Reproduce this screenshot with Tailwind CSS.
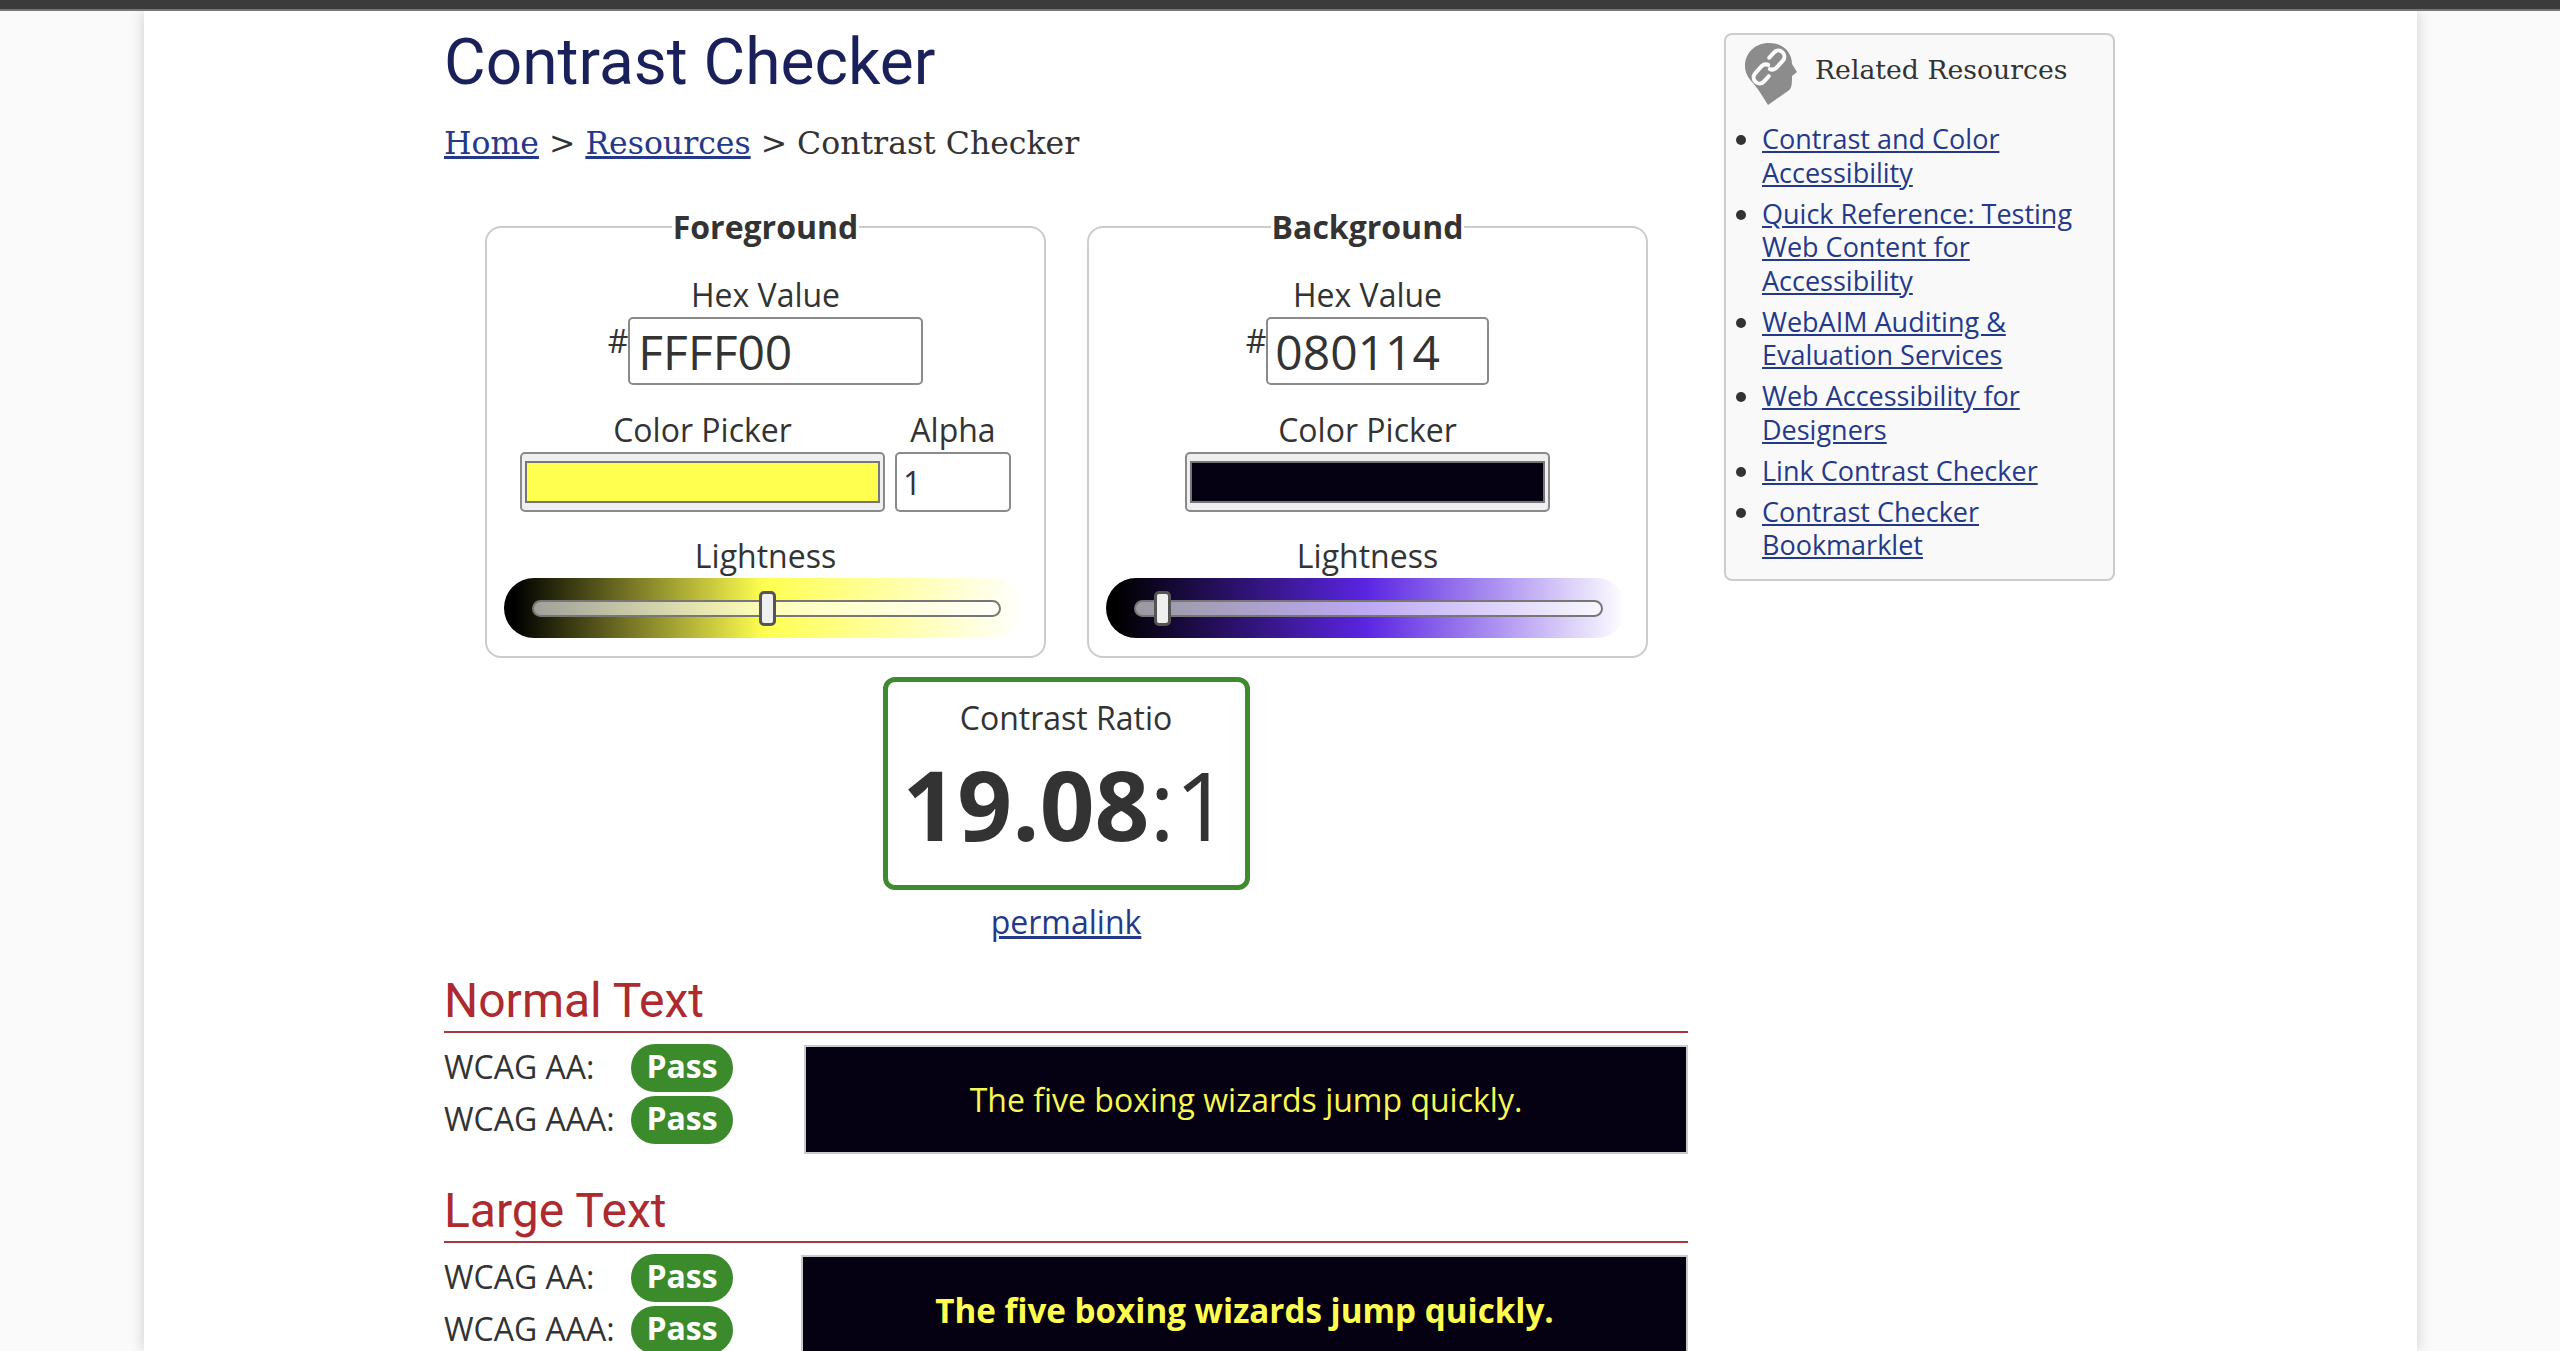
<!DOCTYPE html>
<html lang="en">
<head>
  <meta charset="UTF-8" />
  <meta name="viewport" content="width=device-width, initial-scale=1.0" />
  <title>Contrast Checker</title>
  <script src="https://cdn.jsdelivr.net/npm/@tailwindcss/browser@4"></script>
</head>
<body class="h-screen overflow-hidden bg-[#fafafa] font-['Open_Sans',sans-serif] text-[#333] text-[32px] leading-[44px]">
  <div class="relative z-10 h-[11px] bg-[#3b3b3b] border-b-2 border-[#777]"></div>

  <div class="ml-[144px] w-[2273px] h-[1340px] bg-white shadow-[0_0_14px_rgba(0,0,0,0.18)] pl-[300px] flex">
    <!-- main column -->
    <main class="w-[1244px] shrink-0">
      <h1 class="mt-[16px] font-['Roboto',sans-serif] text-[64px] leading-[72px] text-[#1a2059]">Contrast Checker</h1>
      <p class="mt-[24px] font-['DejaVu_Serif',serif] text-[31.5px] leading-[40px] text-[#333]">
        <a href="#" class="underline text-[#24398a]">Home</a> &gt; <a href="#" class="underline text-[#24398a]">Resources</a> &gt; Contrast Checker
      </p>

      <div class="flex ml-[41px] gap-[41px] mt-[42px]">
        <!-- foreground -->
        <fieldset class="w-[561px] border-2 border-[#ccc] rounded-[16px] pb-[18px]">
          <legend class="mx-auto font-bold text-[32px] px-[1px]">Foreground</legend>
          <div class="mt-[24px] text-center">Hex Value</div>
          <div class="flex justify-center">
            <span class="mt-[2px] h-[40px]">#</span>
            <input type="text" value="FFFF00" class="w-[295px] h-[68px] border-2 border-[#8a8a8a] rounded-[5px] px-[8px] text-[48px] text-[#333]" />
          </div>
          <div class="mt-[23px] flex justify-center gap-[10px]">
            <div class="w-[365px] text-center">
              <div>Color Picker</div>
              <div class="h-[60px] bg-[#efefef] border-2 border-[#8a8a8a] rounded-[5px] px-[3px] py-[7px]">
                <div class="h-full bg-[#ffff50] border-2 border-[#767676]"></div>
              </div>
            </div>
            <div class="w-[116px] text-center">
              <div>Alpha</div>
              <input type="text" value="1" class="w-full h-[60px] border-2 border-[#8a8a8a] rounded-[5px] px-[6px] text-[32px] text-[#333]" />
            </div>
          </div>
          <div class="mt-[22px] text-center">Lightness</div>
          <div class="relative ml-[17px] w-[520px] h-[60px] rounded-[30px] bg-[linear-gradient(to_right,#000_2%,#ffff50_50%,#fff_100%)]">
            <div class="absolute left-[28px] top-[22px] w-[469px] h-[17px] rounded-[9px] bg-white/60 border-2 border-[#777]"></div>
            <div class="absolute left-[255px] top-[13px] w-[17px] h-[35px] rounded-[5px] bg-[#efefef] border-[3px] border-[#555]"></div>
          </div>
        </fieldset>

        <!-- background -->
        <fieldset class="w-[561px] border-2 border-[#ccc] rounded-[16px] pb-[18px]">
          <legend class="mx-auto font-bold text-[32px] px-[1px]">Background</legend>
          <div class="mt-[24px] text-center">Hex Value</div>
          <div class="flex justify-center">
            <span class="mt-[2px] h-[40px]">#</span>
            <input type="text" value="080114" class="w-[223px] h-[68px] border-2 border-[#8a8a8a] rounded-[5px] px-[7px] text-[48px] text-[#333]" />
          </div>
          <div class="mt-[23px] flex justify-center">
            <div class="w-[365px] text-center">
              <div>Color Picker</div>
              <div class="h-[60px] bg-[#efefef] border-2 border-[#8a8a8a] rounded-[5px] px-[3px] py-[7px]">
                <div class="h-full bg-[#050012] border-2 border-[#767676]"></div>
              </div>
            </div>
          </div>
          <div class="mt-[22px] text-center">Lightness</div>
          <div class="relative ml-[17px] w-[520px] h-[60px] rounded-[30px] bg-[linear-gradient(to_right,#000_2%,#5a25e2_50%,#fff_100%)]">
            <div class="absolute left-[28px] top-[22px] w-[469px] h-[17px] rounded-[9px] bg-white/60 border-2 border-[#777]"></div>
            <div class="absolute left-[48px] top-[13px] w-[17px] h-[35px] rounded-[5px] bg-[#efefef] border-[3px] border-[#555]"></div>
          </div>
        </fieldset>
      </div>

      <!-- ratio -->
      <div class="mt-[19px] mx-auto w-[367px] h-[213px] border-[5px] border-[#3d8b2e] rounded-[12px] text-center">
        <div class="mt-[14px]">Contrast Ratio</div>
        <div class="mt-[9px] text-[96px] leading-[110px]"><span class="font-bold">19.08</span>:1</div>
      </div>
      <div class="mt-[10px] text-center"><a href="#" class="underline text-[#24398a]">permalink</a></div>

      <!-- normal text -->
      <h2 class="mt-[27px] font-['Roboto',sans-serif] text-[48px] leading-[60px] text-[#ad2a2f] border-b-2 border-[#a8383c]">Normal Text</h2>
      <div class="mt-[11px] flex items-start">
        <div class="w-[289px] shrink-0 flex flex-col gap-[4px]">
          <div class="flex items-center h-[48px]"><span class="w-[187px] pb-[2px]">WCAG AA:</span><span class="w-[102px] h-[48px] rounded-[24px] bg-[#3b8a2b] text-white font-bold text-center">Pass</span></div>
          <div class="flex items-center h-[48px]"><span class="w-[187px] pb-[2px]">WCAG AAA:</span><span class="w-[102px] h-[48px] rounded-[24px] bg-[#3b8a2b] text-white font-bold text-center">Pass</span></div>
        </div>
        <div class="ml-[71px] mt-[1px] flex-1 h-[109px] bg-[#050012] border-2 border-[#c9c9d0] flex items-center justify-center text-[#f8f852]">The five boxing wizards jump quickly.</div>
      </div>

      <!-- large text -->
      <h2 class="mt-[27px] font-['Roboto',sans-serif] text-[48px] leading-[60px] text-[#ad2a2f] border-b-2 border-[#a8383c]">Large Text</h2>
      <div class="mt-[11px] flex items-start">
        <div class="w-[289px] shrink-0 flex flex-col gap-[4px]">
          <div class="flex items-center h-[48px]"><span class="w-[187px] pb-[2px]">WCAG AA:</span><span class="w-[102px] h-[48px] rounded-[24px] bg-[#3b8a2b] text-white font-bold text-center">Pass</span></div>
          <div class="flex items-center h-[48px]"><span class="w-[187px] pb-[2px]">WCAG AAA:</span><span class="w-[102px] h-[48px] rounded-[24px] bg-[#3b8a2b] text-white font-bold text-center">Pass</span></div>
        </div>
        <div class="ml-[68px] mt-[1px] flex-1 h-[112px] bg-[#050012] border-2 border-[#c9c9d0] flex items-center justify-center text-[#ffff50] text-[33.2px] font-bold">The five boxing wizards jump quickly.</div>
      </div>
    </main>

    <!-- sidebar -->
    <aside class="ml-[36px] mt-[22px] w-[391px] h-[548px] shrink-0 bg-[#f9f9f9] border-2 border-[#ccc] rounded-[8px] text-[27px] leading-[33.5px]">
      <div class="flex pl-[19px] pt-[8px] h-[87px]">
        <svg viewBox="0 0 52 62" class="w-[52px] h-[62px] shrink-0">
          <path fill="#8c8c8c" d="M24 0C38 0 47 9 47 21L52 29L47 33C47 40 47 46 43 48L23 62C18 54 14 47 8 40C2 34 0 28 0 23C0 10 10 0 24 0Z"/>
          <g transform="rotate(-48 24 24)" fill="none" stroke="#fff" stroke-width="4" stroke-linecap="round">
            <path d="M17 30H10a6 6 0 0 1 0-12H20a6 6 0 0 1 5 4"/>
            <path d="M31 18H38a6 6 0 0 1 0 12H28a6 6 0 0 1-5-4"/>
          </g>
        </svg>
        <span class="ml-[18px] mt-[9px] font-['DejaVu_Serif',serif] text-[26.7px] leading-[36px]">Related Resources</span>
      </div>
      <ul class="pl-[36px] pr-[6px] list-disc flex flex-col gap-[7.5px]">
        <li><a href="#" class="underline text-[#24398a]">Contrast and Color Accessibility</a></li>
        <li><a href="#" class="underline text-[#24398a]">Quick Reference: Testing Web Content for Accessibility</a></li>
        <li><a href="#" class="underline text-[#24398a]">WebAIM Auditing &amp; Evaluation Services</a></li>
        <li><a href="#" class="underline text-[#24398a]">Web Accessibility for Designers</a></li>
        <li><a href="#" class="underline text-[#24398a]">Link Contrast Checker</a></li>
        <li><a href="#" class="underline text-[#24398a]">Contrast Checker Bookmarklet</a></li>
      </ul>
    </aside>
  </div>
</body>
</html>
